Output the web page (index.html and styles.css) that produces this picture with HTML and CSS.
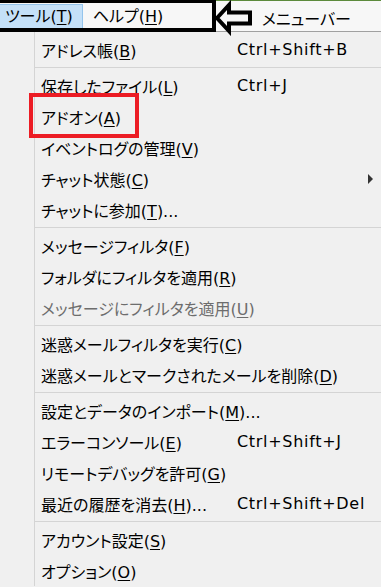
FILE: index.html
```html
<!DOCTYPE html>
<html lang="ja">
<head>
  <meta charset="UTF-8">
  <title>ツール メニュー</title>
  <link rel="stylesheet" href="styles.css">
</head>
<body>
  <div class="screen">
    <!-- Menu bar -->
    <div class="menubar">
      <span class="top-item active">ツール(<u>T</u>)</span>
      <span class="top-item">ヘルプ(<u>H</u>)</span>
    </div>

    <!-- Tools popup -->
    <div class="popup">
      <div class="item"><span class="label">アドレス帳(<u>B</u>)</span><span class="key">Ctrl+Shift+B</span></div>
      <div class="sep"></div>
      <div class="item"><span class="label">保存したファイル(<u>L</u>)</span><span class="key">Ctrl+J</span></div>
      <div class="item"><span class="label">アドオン(<u>A</u>)</span></div>
      <div class="item"><span class="label">イベントログの管理(<u>V</u>)</span></div>
      <div class="item"><span class="label">チャット状態(<u>C</u>)</span><span class="submenu"></span></div>
      <div class="item"><span class="label">チャットに参加(<u>T</u>)...</span></div>
      <div class="sep"></div>
      <div class="item"><span class="label">メッセージフィルタ(<u>F</u>)</span></div>
      <div class="item"><span class="label">フォルダにフィルタを適用(<u>R</u>)</span></div>
      <div class="item disabled"><span class="label">メッセージにフィルタを適用(<u>U</u>)</span></div>
      <div class="sep"></div>
      <div class="item"><span class="label">迷惑メールフィルタを実行(<u>C</u>)</span></div>
      <div class="item"><span class="label">迷惑メールとマークされたメールを削除(<u>D</u>)</span></div>
      <div class="sep"></div>
      <div class="item"><span class="label">設定とデータのインポート(<u>M</u>)...</span></div>
      <div class="item"><span class="label">エラーコンソール(<u>E</u>)</span><span class="key">Ctrl+Shift+J</span></div>
      <div class="item"><span class="label">リモートデバッグを許可(<u>G</u>)</span></div>
      <div class="item"><span class="label">最近の履歴を消去(<u>H</u>)...</span><span class="key">Ctrl+Shift+Del</span></div>
      <div class="sep"></div>
      <div class="item"><span class="label">アカウント設定(<u>S</u>)</span></div>
      <div class="item"><span class="label">オプション(<u>O</u>)</span></div>
    </div>

    <!-- Annotations drawn over the screenshot -->
    <div class="callout-box"></div>
    <svg class="callout-arrow" width="50" height="36" viewBox="0 0 50 36" aria-hidden="true">
      <polygon points="9,18 21,5 21,12.5 42,12.5 42,23.5 21,23.5 21,31" fill="none" stroke="#000" stroke-width="4" stroke-linejoin="miter"/>
    </svg>
    <span class="callout-label">メニューバー</span>
    <div class="highlight-box"></div>
  </div>
</body>
</html>
```

FILE: styles.css
```css
* {
  margin: 0;
  padding: 0;
  box-sizing: border-box;
}

body {
  background-color: #f0f0f0;
  font-family: "DejaVu Sans", "Noto Sans CJK JP", sans-serif;
  font-size: 16px;
  font-feature-settings: "palt";
  color: #000;
}

.screen {
  position: relative;
  width: 381px;
  height: 587px;
  overflow: hidden;
}

u {
  text-decoration-thickness: 1px;
  text-underline-offset: 2px;
}

/* Menu bar */
.menubar {
  display: flex;
  align-items: flex-start;
  height: 31px;
  padding-top: 3px;
  margin-left: -5px;
  background-color: #f7f7f7;
  border-top: 1px solid #5c8a3c;
}

.top-item {
  height: 25px;
  line-height: 24px;
  padding: 0 9px;
  border: 1px solid transparent;
  white-space: nowrap;
}

.top-item.active {
  background-color: #c4e0f8;
  border-color: #94c4ec;
}

/* Popup menu */
.popup {
  border-top: 1px solid #a0a0a0;
  padding-top: 2px;
  background: linear-gradient(to right, transparent 34px, #d4d4d4 34px, #d4d4d4 35px, transparent 35px), #f0f0f0;
}

.item {
  display: flex;
  align-items: center;
  height: 31px;
  padding: 0 8px 0 41px;
  white-space: nowrap;
}

.item .label {
  flex-shrink: 0;
  width: 196px;
}

.item .key {
  letter-spacing: 0.7px;
}

.item.disabled {
  color: #6d6d6d;
}

.submenu {
  margin-left: auto;
  border-left: 5px solid #333;
  border-top: 5px solid transparent;
  border-bottom: 5px solid transparent;
}

.sep {
  height: 1px;
  margin: 2px 0 2px 35px;
  background-color: #d4d4d4;
}

/* Annotations */
.callout-box {
  position: absolute;
  left: -4px;
  top: -1px;
  width: 220px;
  height: 33px;
  border: 4px solid #000;
}

.callout-arrow {
  position: absolute;
  left: 208px;
  top: 0;
}

.callout-label {
  position: absolute;
  left: 262px;
  top: 10px;
  line-height: 20px;
}

.highlight-box {
  position: absolute;
  left: 29px;
  top: 93px;
  width: 110px;
  height: 45px;
  border: 4px solid #ec1c24;
}
```
